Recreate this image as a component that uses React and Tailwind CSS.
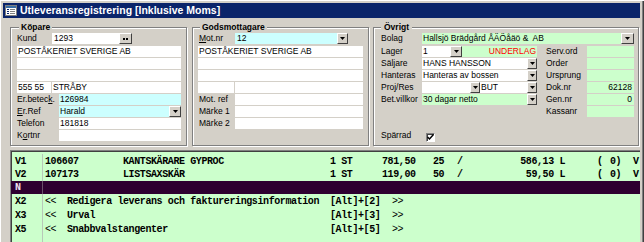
import React from "react";

function DropBtn({ className = "w-[12px]" }) {
  return (
    <div className={`${className} h-full shrink-0 bg-[#d4d0c8] border border-t-white border-l-white border-r-[#404040] border-b-[#404040] flex items-center justify-center`}>
      <svg width="5" height="3" viewBox="0 0 5 3">
        <path d="M0 0h5L2.5 3z" fill="#000" />
      </svg>
    </div>
  );
}

function DotsBtn() {
  return (
    <div className="w-[13px] h-full shrink-0 bg-[#d4d0c8] border border-t-white border-l-white border-r-[#404040] border-b-[#404040] flex items-center justify-center">
      <svg width="5" height="2" viewBox="0 0 5 2">
        <rect x="0" y="0" width="2" height="2" fill="#000" />
        <rect x="3" y="0" width="2" height="2" fill="#000" />
      </svg>
    </div>
  );
}

function Box({ bg = "bg-white", className = "flex-1", children }) {
  return <div className={`h-full ${bg} ${className} pl-[1px] whitespace-pre overflow-hidden`}>{children}</div>;
}

function Row({ children, className = "" }) {
  return <div className={`flex h-[11px] items-stretch ${className}`}>{children}</div>;
}

function Lbl({ className = "w-[41px]", children }) {
  return <div className={`${className} shrink-0 whitespace-nowrap`}>{children}</div>;
}

function TitleIcon() {
  return (
    <svg width="12" height="11" viewBox="0 0 12 11">
      <rect x="0.5" y="0.5" width="11" height="10" fill="#fff" stroke="#808080" />
      <rect x="1" y="1" width="10" height="2" fill="#3a6ea5" />
      <rect x="2" y="4" width="2" height="1" fill="#0a246a" />
      <rect x="5" y="4" width="5" height="1" fill="#808080" />
      <rect x="2" y="6" width="2" height="1" fill="#0a246a" />
      <rect x="5" y="6" width="5" height="1" fill="#808080" />
      <rect x="2" y="8" width="2" height="1" fill="#0a246a" />
      <rect x="5" y="8" width="5" height="1" fill="#808080" />
    </svg>
  );
}

const groupCls =
  "h-[124px] border border-[#808080] shadow-[1px_1px_0_#ffffff,inset_1px_1px_0_#ffffff] shrink-0";
const legendCls = "ml-[2px] px-[2px] bg-[#d4d0c8] font-bold leading-[11px]";

function Koepare() {
  return (
    <fieldset className={`${groupCls} w-[177px] pl-[6px] pr-[5px]`}>
      <legend className={legendCls}>Köpare</legend>
      <div className="flex flex-col gap-[1px]">
        <Row>
          <Lbl className="w-[35px]">Kund</Lbl>
          <Box className="w-[67px] pl-[2px]">1293</Box>
          <DotsBtn />
        </Row>
        <Row className="mt-[1px]">
          <Box>POSTÅKERIET SVERIGE AB</Box>
        </Row>
        <Row><Box /></Row>
        <Row><Box /></Row>
        <Row className="gap-[1px]">
          <Box className="w-[34px]">555 55</Box>
          <Box>STRÅBY</Box>
        </Row>
        <Row>
          <Lbl className="w-[42px]">Er.betec<span className="underline">k</span>.</Lbl>
          <Box bg="bg-[#ccffff]">126984</Box>
        </Row>
        <Row>
          <Lbl className="w-[42px]"><span className="underline">E</span>r.Ref</Lbl>
          <Box bg="bg-[#ccffff]">Harald</Box>
          <DropBtn />
        </Row>
        <Row>
          <Lbl className="w-[42px]">Telefon</Lbl>
          <Box>181818</Box>
        </Row>
        <Row>
          <Lbl className="w-[42px]">K<span className="underline">o</span>rtnr</Lbl>
          <Box />
        </Row>
      </div>
    </fieldset>
  );
}

function Godsmottagare() {
  return (
    <fieldset className={`${groupCls} w-[177px] ml-[5px] pl-[5px] pr-[5px]`}>
      <legend className={legendCls}>Godsmottagare</legend>
      <div className="flex flex-col gap-[1px]">
        <Row>
          <Lbl className="w-[37px] pl-[1px]"><span className="underline">M</span>ot.nr</Lbl>
          <Box bg="bg-[#ccffff]" className="w-[102px] pl-[2px]">12</Box>
          <DropBtn className="w-[11px]" />
        </Row>
        <Row className="mt-[1px]">
          <Box>POSTÅKERIET SVERIGE AB</Box>
        </Row>
        <Row><Box /></Row>
        <Row><Box /></Row>
        <Row className="gap-[1px]">
          <Box className="w-[36px]" />
          <Box />
        </Row>
        <Row>
          <Lbl className="w-[37px] pl-[1px]">Mot. ref</Lbl>
          <Box />
        </Row>
        <Row>
          <Lbl className="w-[37px] pl-[1px]">Märke 1</Lbl>
          <Box />
        </Row>
        <Row>
          <Lbl className="w-[37px] pl-[1px]">Märke 2</Lbl>
          <Box />
        </Row>
      </div>
    </fieldset>
  );
}

function Ovrigt() {
  const right = [
    ["Serv.ord", ""],
    ["Order", ""],
    ["Ursprung", ""],
    ["Dok.nr", "62128"],
    ["Gen.nr", "0"],
    ["Kassanr", ""],
  ];
  return (
    <fieldset className={`${groupCls} w-[266px] ml-[4px] pl-[7px] pr-[4px]`}>
      <legend className="ml-0 px-[3px] bg-[#d4d0c8] font-bold leading-[11px]">Övrigt</legend>
      <div className="flex flex-col gap-[1px]">
        <Row>
          <Lbl>Bolag</Lbl>
          <Box bg="bg-[#ccffcc]">Hallsjö Brädgård ÅÄÖåäö &amp;  AB</Box>
          <DropBtn className="w-[13px]" />
        </Row>
        <div className="flex mt-[1px]">
          <div className="w-[156px] flex flex-col gap-[1px]">
            <Row>
              <Lbl>Lager</Lbl>
              <Box className="w-[28px]">1</Box>
              <DropBtn />
              <div className="flex-1 h-full bg-[#ccffcc] text-right text-[#ff0000] pr-[1px]">UNDERLAG</div>
            </Row>
            <Row>
              <Lbl>Säljare</Lbl>
              <Box className="w-[105px]">HANS HANSSON</Box>
              <DropBtn className="w-[10px]" />
            </Row>
            <Row>
              <Lbl>Hanteras</Lbl>
              <Box className="w-[105px]">Hanteras av bossen</Box>
              <DropBtn className="w-[10px]" />
            </Row>
            <Row>
              <Lbl>Proj/Res</Lbl>
              <Box className="w-[48px]" />
              <DropBtn className="w-[10px]" />
              <Box className="w-[47px]">BUT</Box>
              <DropBtn className="w-[10px]" />
            </Row>
            <Row>
              <Lbl>Bet.villkor</Lbl>
              <Box bg="bg-[#ccffcc]" className="w-[105px]">30 dagar netto</Box>
              <DropBtn className="w-[10px]" />
            </Row>
            <div className="flex h-[13px] mt-[24px]">
              <Lbl className="w-[45px]">Spärrad</Lbl>
              <div className="w-[9px] h-[9px] mt-[3px] bg-white border border-t-[#808080] border-l-[#808080] border-r-white border-b-white shadow-[inset_1px_1px_0_#404040] flex items-center justify-center">
                <svg width="7" height="7" viewBox="0 0 7 7">
                  <path d="M0.5 3l2 2 4-4.5" stroke="#000" strokeWidth="1.5" fill="none" />
                </svg>
              </div>
            </div>
          </div>
          <div className="ml-[9px] flex-1 flex flex-col gap-[1px]">
            {right.map(([l, v]) => (
              <Row key={l}>
                <Lbl>{l}</Lbl>
                <div className="flex-1 h-full bg-[#ccffcc] text-right pr-[2px]">{v}</div>
              </Row>
            ))}
          </div>
        </div>
      </div>
    </fieldset>
  );
}

const vRows = [
  { k: "V1", art: "106607", txt: "KANTSKÄRARE GYPROC", q: "1 ST", p: "781,50", r: "25", s: "586,13 L", h: "h-[17px] pt-[3px]" },
  { k: "V2", art: "107173", txt: "LISTSAXSKÄR", q: "1 ST", p: "119,00", r: "50", s: "59,50 L", h: "h-[13px]" },
];

const xRows = [
  { k: "X2", txt: "Redigera leverans och faktureringsinformation", alt: "[Alt]+[2]", h: "h-[14px]" },
  { k: "X3", txt: "Urval", alt: "[Alt]+[3]", h: "h-[14px]" },
  { k: "X5", txt: "Snabbvalstangenter", alt: "[Alt]+[5]", h: "h-[14px]" },
];

function Grid() {
  return (
    <div className="ml-[7px] mt-[4px] flex-1 min-h-0 bg-[#ccffcc] border-t border-l border-[#808080] shadow-[inset_1px_1px_0_#404040] flex flex-col font-['Liberation_Mono',monospace] font-bold text-[10px] leading-[13px] tracking-[-0.4px] whitespace-pre">
      {vRows.map((r) => (
        <div key={r.k} className={`flex items-center shrink-0 ${r.h}`}>
          <div className="w-[32px] h-full pl-[4px] border-r border-[#b8c8b8] flex items-center">{r.k}</div>
          <div className="w-[80px] pl-[2px]">{r.art}</div>
          <div className="w-[207px]">{r.txt}</div>
          <div className="w-[52px]">{r.q}</div>
          <div className="w-[51px]">{r.p}</div>
          <div className="w-[24px]">{r.r}</div>
          <div className="w-[10px]">/</div>
          <div className="w-[98px] text-right">{r.s}</div>
          <div className="w-[32px]" />
          <div className="w-[13px]">(</div>
          <div className="w-[23px]">0)</div>
          <div>V</div>
        </div>
      ))}
      <div className="flex items-center shrink-0 h-[13px] bg-[#2e0030] text-[#f0e0f0]">
        <div className="w-[32px] h-full pl-[4px] border-r border-[#6a506a] flex items-center">N</div>
      </div>
      {xRows.map((r) => (
        <div key={r.k} className={`flex items-center shrink-0 ${r.h}`}>
          <div className="w-[32px] h-full pl-[4px] border-r border-[#b8c8b8] flex items-center">{r.k}</div>
          <div className="w-[24px] pl-[2px] font-normal">&lt;&lt;</div>
          <div className="w-[263px]">{r.txt}</div>
          <div className="w-[62px]">{r.alt}</div>
          <div className="font-normal">&gt;&gt;</div>
        </div>
      ))}
      <div className="flex flex-1">
        <div className="w-[32px] border-r border-[#b8c8b8]" />
      </div>
    </div>
  );
}

export default function App() {
  return (
    <div className="w-[644px] h-[242px] overflow-hidden flex flex-col bg-[#d4d0c8] pl-[3px] pt-[3px] pr-[4px] shadow-[inset_1px_1px_0_#ffffff,inset_-1px_0_0_#404040,inset_-2px_0_0_#808080] font-['Liberation_Sans',Arial,sans-serif] text-[8.5px] leading-[11px] text-black">
      <div className="h-[15px] shrink-0 bg-[#0a246a] flex items-center pl-[2px] gap-[3px]">
        <TitleIcon />
        <span className="text-white font-bold text-[10.5px] leading-[15px] whitespace-nowrap">
          Utleveransregistrering [Inklusive Moms]
        </span>
      </div>
      <div className="flex shrink-0 pl-[7px] mt-[4px]">
        <Koepare />
        <Godsmottagare />
        <Ovrigt />
      </div>
      <Grid />
    </div>
  );
}
